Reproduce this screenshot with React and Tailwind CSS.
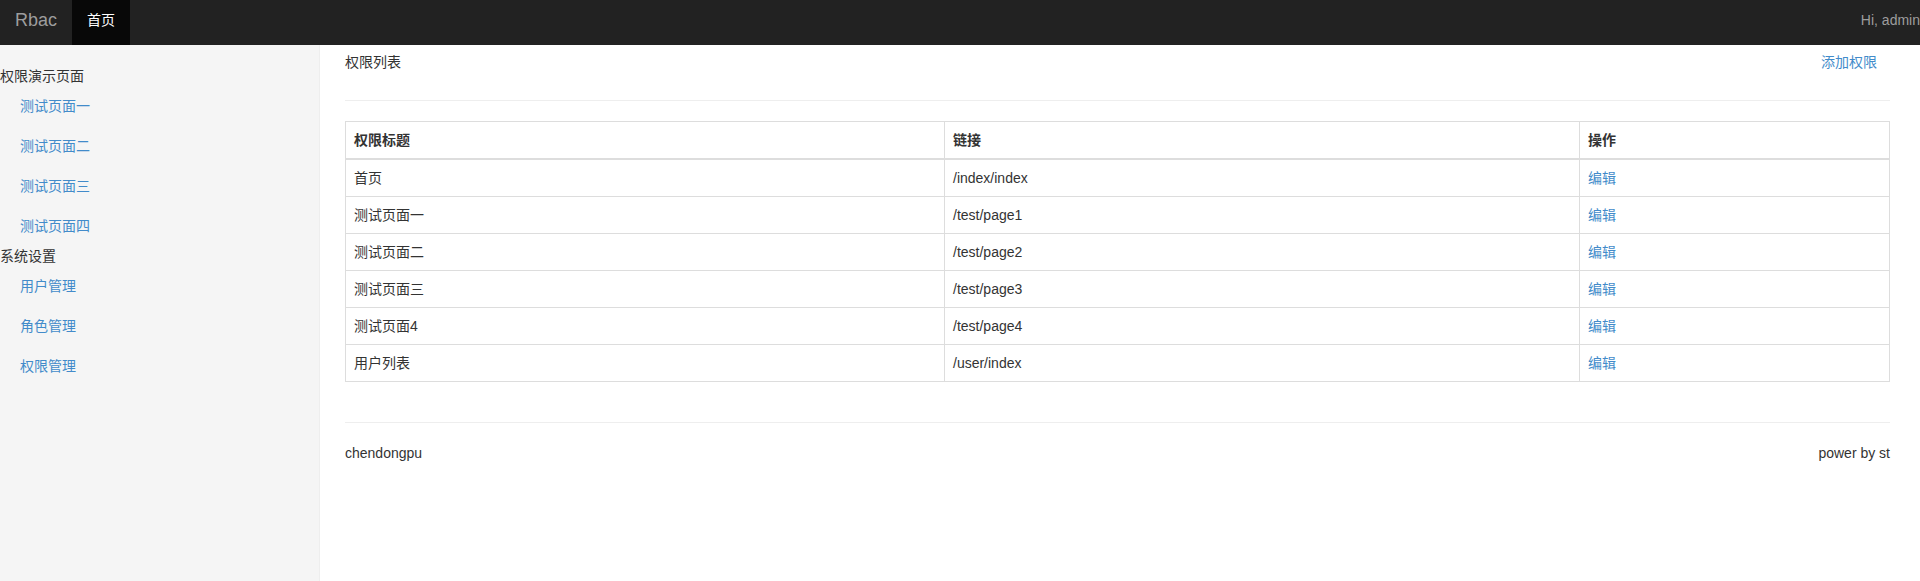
import React from 'react';

const MENU = [
    { title: '权限演示页面', items: ['测试页面一', '测试页面二', '测试页面三', '测试页面四'] },
    { title: '系统设置', items: ['用户管理', '角色管理', '权限管理'] }
];

const ROWS = [
    { title: '首页', url: '/index/index' },
    { title: '测试页面一', url: '/test/page1' },
    { title: '测试页面二', url: '/test/page2' },
    { title: '测试页面三', url: '/test/page3' },
    { title: '测试页面4', url: '/test/page4' },
    { title: '用户列表', url: '/user/index' }
];

const App = () => {
    return (
        <div
            className="min-h-[581px] h-screen flex flex-col bg-white text-[14px] leading-[20px] text-[#333]"
            style={{ fontFamily: '"Liberation Sans", Arial, "Noto Sans CJK SC", sans-serif' }}
        >
            {/* 顶部导航 */}
            <div className="h-[45px] shrink-0 bg-[#222] flex">
                <div className="w-[72px] pl-[15px] pt-[10px] text-[18px] leading-[20px] text-[#9d9d9d]">Rbac</div>
                <div className="w-[58px] bg-[#080808] pt-[10px] text-center text-white">首页</div>
                <div className="ml-auto pt-[10px] text-[#9d9d9d] whitespace-nowrap">Hi, admin</div>
            </div>

            <div className="flex flex-1">
                {/* 侧边栏 */}
                <div className="w-[320px] shrink-0 bg-[#f5f5f5] border-r border-[#eee] pt-[21px]">
                    {MENU.map(group => (
                        <div key={group.title}>
                            <div className="h-[20px]">{group.title}</div>
                            <ul>
                                {group.items.map(item => (
                                    <li key={item}>
                                        <a href="#" className="block px-[20px] py-[10px] text-[#428bca]">{item}</a>
                                    </li>
                                ))}
                            </ul>
                        </div>
                    ))}
                </div>

                {/* 主体 */}
                <div className="flex-1 pl-[25px] pr-[30px] pt-[7px]">
                    <div className="flex justify-between h-[20px]">
                        <span>权限列表</span>
                        <a href="#" className="pr-[13px] text-[#428bca]">添加权限</a>
                    </div>
                    <div className="mt-[28px] border-t border-[#eee]"></div>

                    <table className="mt-[20px] w-full table-fixed border-collapse border border-[#ddd]">
                        <colgroup>
                            <col className="w-[599px]" />
                            <col className="w-[635px]" />
                            <col />
                        </colgroup>
                        <thead>
                            <tr>
                                <th className="border border-[#ddd] border-b-2 p-[8px] text-left font-bold">权限标题</th>
                                <th className="border border-[#ddd] border-b-2 p-[8px] text-left font-bold">链接</th>
                                <th className="border border-[#ddd] border-b-2 p-[8px] text-left font-bold">操作</th>
                            </tr>
                        </thead>
                        <tbody>
                            {ROWS.map(r => (
                                <tr key={r.url}>
                                    <td className="border border-[#ddd] p-[8px]">{r.title}</td>
                                    <td className="border border-[#ddd] p-[8px]">{r.url}</td>
                                    <td className="border border-[#ddd] p-[8px]">
                                        <a href="#" className="text-[#428bca]">编辑</a>
                                    </td>
                                </tr>
                            ))}
                        </tbody>
                    </table>

                    <div className="mt-[40px] border-t border-[#eee]"></div>
                    <div className="mt-[20px] flex justify-between">
                        <span>chendongpu</span>
                        <span>power by st</span>
                    </div>
                </div>
            </div>
        </div>
    );
};

export default App;
